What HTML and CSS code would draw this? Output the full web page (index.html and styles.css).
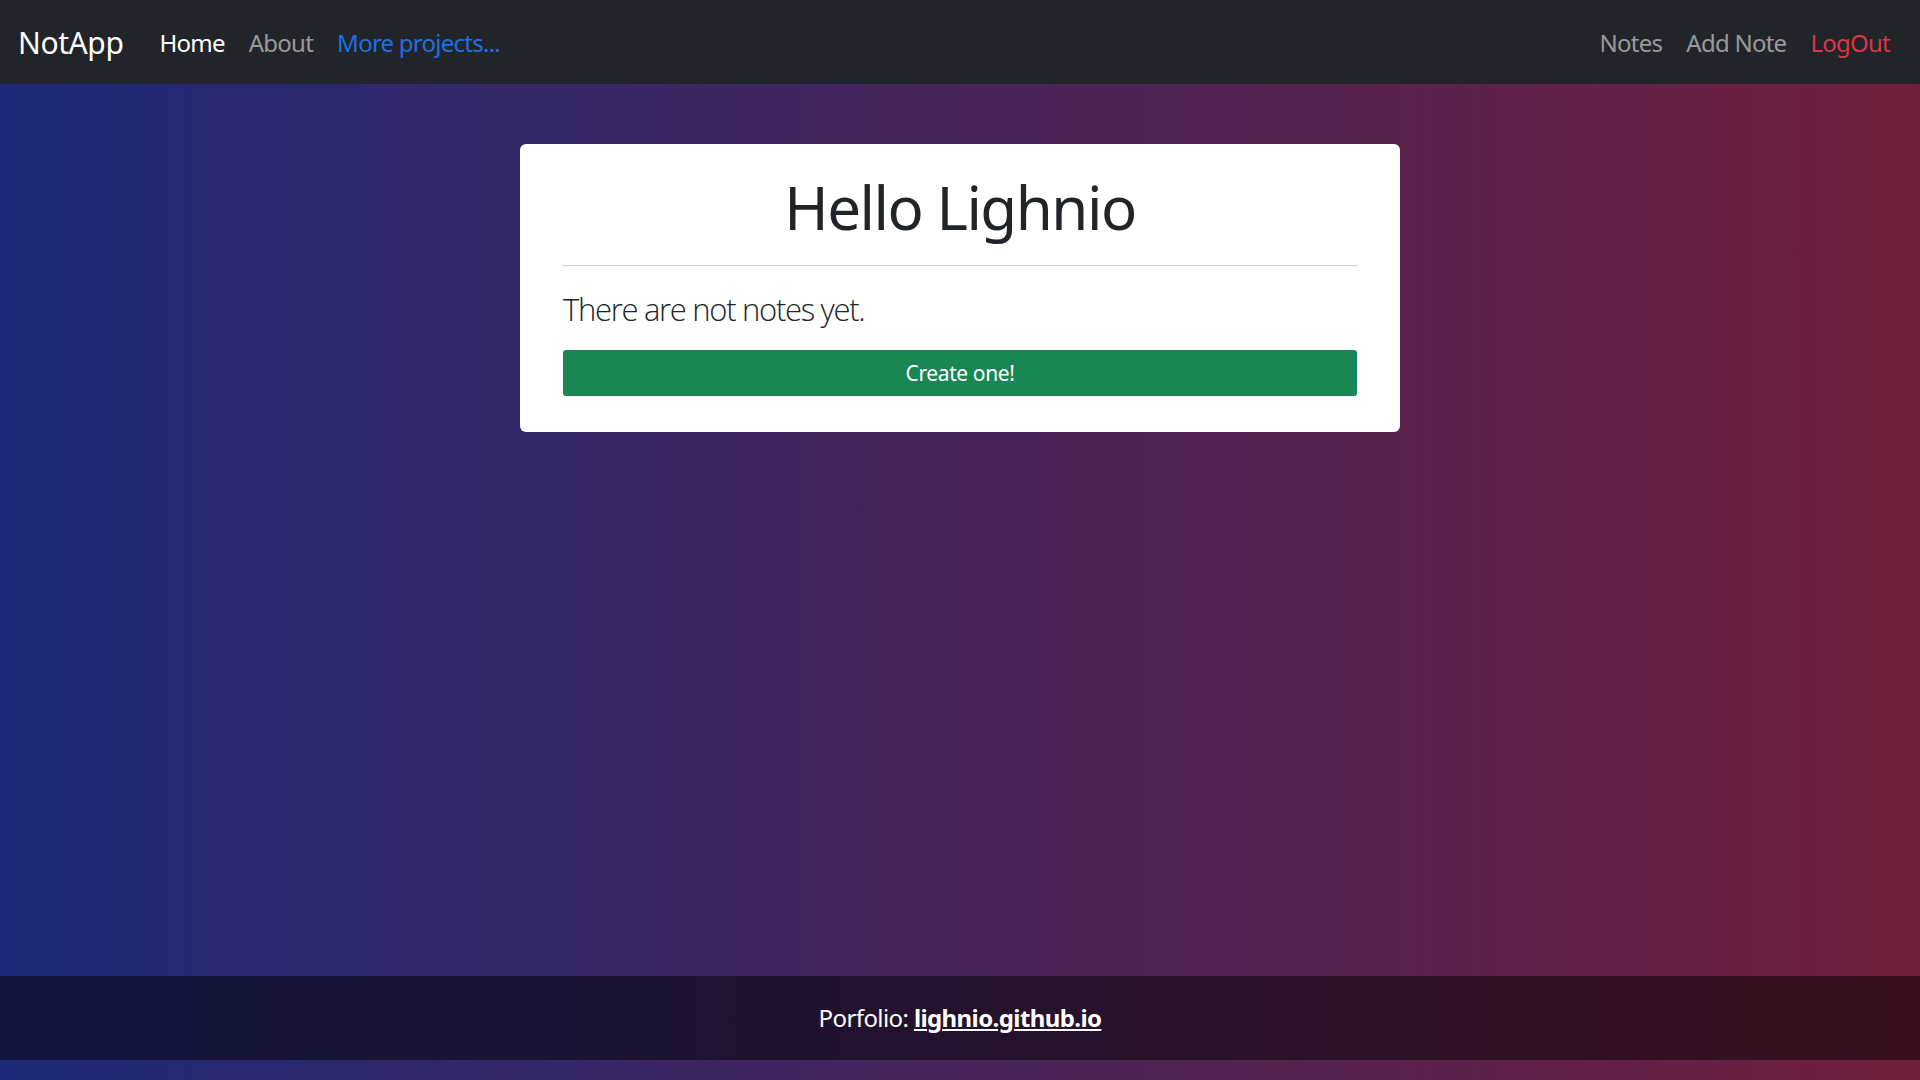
FILE: index.html
```html
<!DOCTYPE html>
<html lang="en">
<head>
<meta charset="utf-8">
<title>NotApp</title>
<link rel="stylesheet" href="styles.css">
</head>
<body>
<nav class="navbar">
  <a class="brand" href="#">NotApp</a>
  <ul class="nav nav-left">
    <li><a class="nav-link active" href="#">Home</a></li>
    <li><a class="nav-link" href="#">About</a></li>
    <li><a class="nav-link link-primary" href="#">More projects...</a></li>
  </ul>
  <ul class="nav nav-right">
    <li><a class="nav-link" href="#">Notes</a></li>
    <li><a class="nav-link" href="#">Add Note</a></li>
    <li><a class="nav-link link-danger" href="#">LogOut</a></li>
  </ul>
</nav>
<main class="main">
  <section class="card">
    <h1 class="title">Hello Lighnio</h1>
    <hr class="divider">
    <p class="lead">There are not notes yet.</p>
    <a class="btn-create" href="#">Create one!</a>
  </section>
</main>
<footer class="footer">
  <p class="footer-text">Porfolio: <a class="footer-link" href="#">lighnio.github.io</a></p>
</footer>
</body>
</html>
```
FILE: styles.css
```css
* { box-sizing: border-box; }
html, body { height: 100%; }
body {
  margin: 0;
  font-family: "Noto Sans", "Open Sans", "Liberation Sans", sans-serif;
  background: linear-gradient(to right, #1e2a78 0%, #701f3c 100%);
  display: flex;
  flex-direction: column;
  color: #212529;
}
a { text-decoration: none; }
.navbar {
  height: 84px;
  flex: 0 0 84px;
  background: #212529;
  display: flex;
  align-items: center;
  padding: 0 18px;
}
.brand {
  color: #fff;
  font-size: 30px;
  line-height: 45px;
  letter-spacing: -0.4px;
  margin-right: 24px;
}
.nav {
  list-style: none;
  margin: 0;
  padding: 0;
  display: flex;
  align-items: center;
}
.nav-right { margin-left: auto; }
.nav-link {
  display: block;
  padding: 13px 12px 11px;
  font-size: 24px;
  line-height: 36px;
  letter-spacing: -0.75px;
  color: rgba(255, 255, 255, 0.55);
}
.nav-link.active { color: #fff; }
.nav-link.link-primary { color: #1f6fe0; }
.nav-link.link-danger { color: #dc3545; }
.main {
  flex: 1 1 auto;
  display: flex;
  justify-content: center;
  align-items: flex-start;
  padding-top: 60px;
}
.card {
  width: 880px;
  background: #fff;
  border-radius: 6px;
  padding: 27px 43px 36px;
  display: flex;
  flex-direction: column;
}
.title {
  margin: 0;
  font-size: 60px;
  line-height: 72px;
  font-weight: 400;
  letter-spacing: -1.5px;
  text-align: center;
  color: #212529;
}
.divider {
  margin: 22px 0 0;
  border: 0;
  border-top: 1px solid #cfcfcf;
  height: 0;
}
.lead {
  margin: 20px 0 0;
  font-family: "Open Sans", "Noto Sans", sans-serif;
  font-size: 31px;
  line-height: 46px;
  font-weight: 300;
  letter-spacing: -1.3px;
  color: #212529;
}
.btn-create {
  margin-top: 18px;
  display: block;
  height: 46px;
  line-height: 46px;
  background: #198754;
  color: #fff;
  text-align: center;
  font-size: 21px;
  letter-spacing: -0.4px;
  border-radius: 3px;
}
.footer {
  flex: 0 0 84px;
  height: 84px;
  margin-bottom: 20px;
  background: rgba(0, 0, 0, 0.5);
  display: flex;
  align-items: center;
  justify-content: center;
}
.footer-text {
  margin: 0;
  color: #fff;
  font-size: 24px;
  line-height: 36px;
  letter-spacing: -0.6px;
}
.footer-link {
  color: #fff;
  font-weight: 700;
  text-decoration: underline;
}
```
